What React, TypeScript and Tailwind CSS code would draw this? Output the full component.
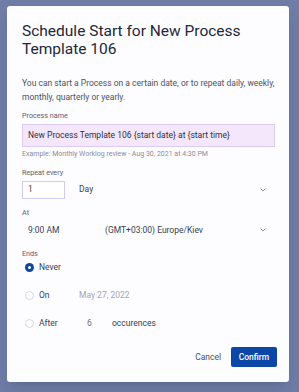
import { ChevronDown } from "lucide-react";

const font = { fontFamily: "Roboto, 'Liberation Sans', sans-serif" };

// 小さなラジオボタン
function Radio({ checked }: { checked?: boolean }) {
  if (checked) {
    return (
      <span className="flex h-[9px] w-[9px] shrink-0 items-center justify-center rounded-full bg-[#0c47a8]">
        <span className="block h-[3px] w-[3px] rounded-full bg-white" />
      </span>
    );
  }
  return <span className="block h-[9px] w-[9px] shrink-0 rounded-full border border-[#d6d3ea] bg-white" />;
}

function Label({ children }: { children: string }) {
  return <p className="text-[7.2px] leading-[10px] text-[#585d70]">{children}</p>;
}

export default function App() {
  return (
    <div className="h-[392px] w-[299px] overflow-hidden bg-[#6e7ca6] pl-[7px] pt-[6px]" style={font}>
      <div className="flex h-[376px] w-[282px] flex-col rounded-[3px] bg-[#fdfcff] pb-[15px] pl-[15px] pr-[14px] pt-[16px] shadow-lg">
        {/* タイトル */}
        <h1 className="text-[15.5px] leading-[18px] font-normal text-[#23283a]">
          Schedule Start for New Process Template 106
        </h1>

        <p className="mt-[19px] text-[8.5px] leading-[13.5px] text-[#4d5266]">
          You can start a Process on a certain date, or to repeat daily, weekly, monthly, quarterly or yearly.
        </p>

        <div className="mt-[7px]">
          <Label>Process name</Label>
          <div className="mt-[2.5px] flex h-[23px] items-center border border-[#dccbf2] bg-[#f4e7fb] px-[5px] text-[8.5px] text-[#2c3144]">
            New Process Template 106 {"{start date}"} at {"{start time}"}
          </div>
          <p className="mt-[2.5px] text-[7px] leading-[10px] text-[#8a8d9b]">
            Example: Monthly Worklog review - Aug 30, 2021 at 4:30 PM
          </p>
        </div>

        <div className="mt-[9px]">
          <Label>Repeat every</Label>
          <div className="mt-[2.5px] flex h-[18px] items-center text-[8.5px] text-[#3a3f52]">
            <div className="flex h-[18px] w-[43px] items-center border border-[#d3cbee] bg-white px-[5px]">1</div>
            <span className="ml-[14px] flex-1">Day</span>
            <ChevronDown size={8} strokeWidth={2.2} className="mr-[8px] text-[#60657a]" />
          </div>
        </div>

        <div className="mt-[9.5px]">
          <Label>At</Label>
          <div className="mt-[3px] flex h-[18px] items-center text-[8.5px] text-[#3a3f52]">
            <span className="ml-[6px] w-[77px]">9:00 AM</span>
            <span className="flex-1">(GMT+03:00) Europe/Kiev</span>
            <ChevronDown size={8} strokeWidth={2.2} className="mr-[8px] text-[#60657a]" />
          </div>
        </div>

        <div className="mt-[9.5px]">
          <Label>Ends</Label>
          <div className="flex flex-col gap-[10px] text-[8.5px] text-[#3a3f52]">
            <div className="flex h-[18px] items-center">
              <span className="ml-[3px]"><Radio checked /></span>
              <span className="ml-[5px]">Never</span>
            </div>
            <div className="flex h-[18px] items-center">
              <span className="ml-[3px]"><Radio /></span>
              <span className="ml-[5px] w-[40px]">On</span>
              <span className="text-[#a3a4b4]">May 27, 2022</span>
            </div>
            <div className="flex h-[18px] items-center">
              <span className="ml-[3px]"><Radio /></span>
              <span className="ml-[5px] w-[48px]">After</span>
              <span className="w-[25px] text-[#6a6e7e]">6</span>
              <span>occurences</span>
            </div>
          </div>
        </div>

        {/* ボタン */}
        <div className="mt-auto -mr-[2px] flex items-center justify-end gap-[10px]">
          <button type="button" className="text-[8.5px] text-[#4a4f63]">Cancel</button>
          <button
            type="button"
            className="h-[20px] w-[46px] rounded-[2px] bg-[#0c47a8] text-[8.5px] font-medium text-white"
          >
            Confirm
          </button>
        </div>
      </div>
    </div>
  );
}
